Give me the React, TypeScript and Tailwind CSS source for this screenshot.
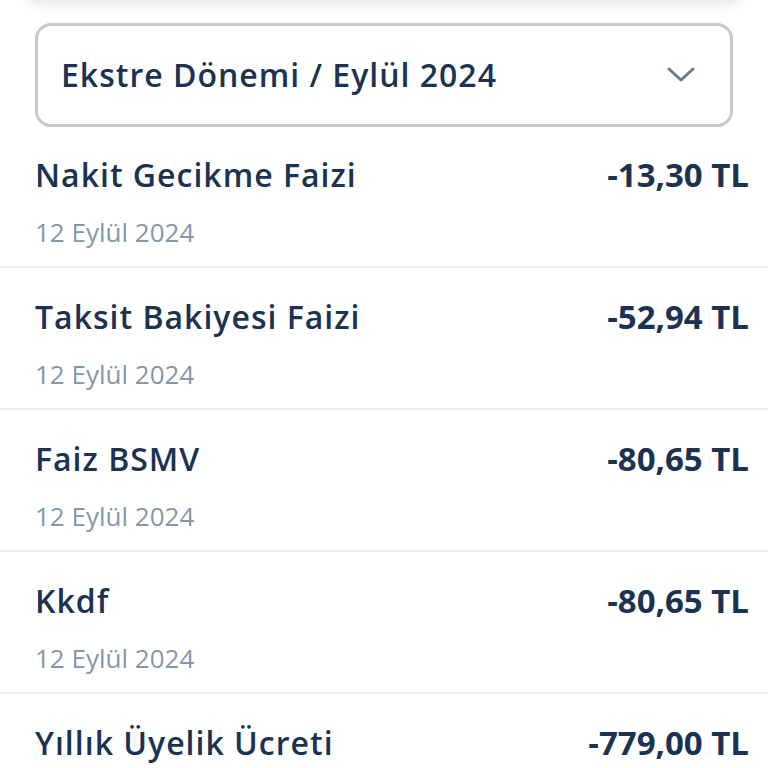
import React from 'react';

interface Txn {
    title: string;
    date?: string;
    amount: string;
}

const TXNS: Txn[] = [
    { title: 'Nakit Gecikme Faizi', date: '12 Eylül 2024', amount: '-13,30 TL' },
    { title: 'Taksit Bakiyesi Faizi', date: '12 Eylül 2024', amount: '-52,94 TL' },
    { title: 'Faiz BSMV', date: '12 Eylül 2024', amount: '-80,65 TL' },
    { title: 'Kkdf', date: '12 Eylül 2024', amount: '-80,65 TL' },
    { title: 'Yıllık Üyelik Ücreti', date: '12 Eylül 2024', amount: '-779,00 TL' },
];

const ChevronDown = () => (
    <svg width="30" height="18" viewBox="0 0 30 18" fill="none">
        <path d="M3 3 L15 14 L27 3" stroke="#6b7b8e" strokeWidth="3" strokeLinecap="round" strokeLinejoin="round" />
    </svg>
);

export default function App() {
    return (
        <div className="w-[768px] h-[768px] overflow-hidden bg-white font-['Open_Sans',sans-serif] text-[#1b3350]">
            {/* Card above, only its shadow shows */}
            <div className="mx-[22px] -mt-[40px] h-[40px] rounded-b-[20px] bg-white shadow-[0_4px_14px_rgba(0,0,0,0.10)]" />

            {/* Period selector */}
            <div className="px-[35px] pt-[23px]">
                <button
                    type="button"
                    className="w-full h-[104px] flex items-center justify-between pl-[23px] pr-[34px] rounded-[16px] border-[3px] border-[#c6c9ce] bg-white"
                >
                    <span className="text-[32px] font-semibold tracking-[1px] leading-none">Ekstre Dönemi / Eylül 2024</span>
                    <ChevronDown />
                </button>
            </div>

            {/* Transactions */}
            <div className="-mt-[1px]">
                {TXNS.map((t, i) => (
                    <div key={i} className="border-b-2 border-[#ededed] pl-[35px] pr-[19px] h-[142px] flex flex-col pt-[29px]">
                        <div className="flex items-center justify-between">
                            <span className="text-[32px] font-semibold tracking-[1px] leading-[40px]">{t.title}</span>
                            <span className="text-[33px] font-bold leading-[40px]">{t.amount}</span>
                        </div>
                        <span className="mt-[22px] text-[26px] leading-[30px] text-[#8896a6]">{t.date}</span>
                    </div>
                ))}
            </div>
        </div>
    );
}
